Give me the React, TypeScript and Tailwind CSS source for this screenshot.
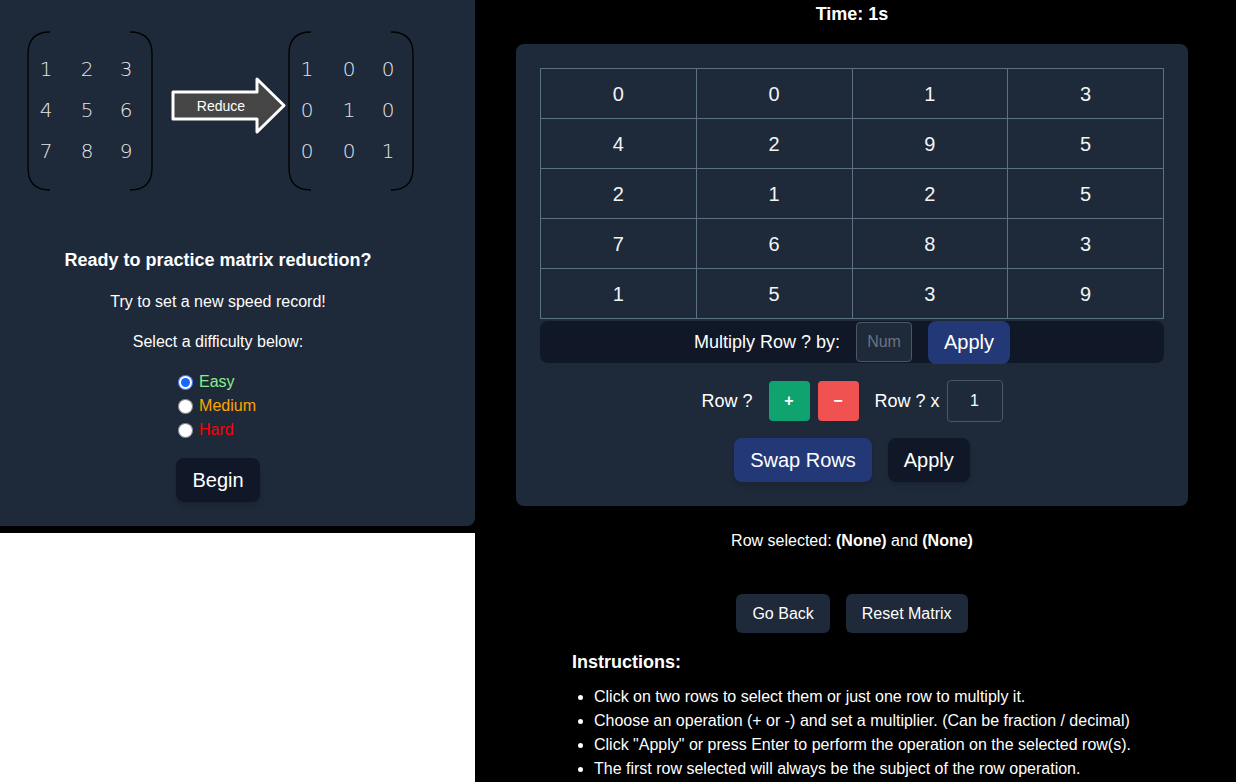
import React, { useState } from 'react';

const matrix = [
  [0, 0, 1, 3],
  [4, 2, 9, 5],
  [2, 1, 2, 5],
  [7, 6, 8, 3],
  [1, 5, 3, 9],
];

const instructions = [
  'Click on two rows to select them or just one row to multiply it.',
  'Choose an operation (+ or -) and set a multiplier. (Can be fraction / decimal)',
  'Click "Apply" or press Enter to perform the operation on the selected row(s).',
  'The first row selected will always be the subject of the row operation.',
];

const ReduceGraphic: React.FC = () => {
  const cols1 = [46, 87, 126];
  const cols2 = [307, 349, 388];
  const rows = [76, 117, 158];
  const left = [
    [1, 2, 3],
    [4, 5, 6],
    [7, 8, 9],
  ];
  const right = [
    [1, 0, 0],
    [0, 1, 0],
    [0, 0, 1],
  ];
  const numFont = { fontFamily: '"DejaVu Sans", sans-serif', fontWeight: 200 };
  return (
    <svg width="430" height="210" viewBox="0 0 430 210" className="block">
      <g fill="none" stroke="#000" strokeWidth="1.3">
        <path d="M50 32 Q28 32 28 54 V168 Q28 190 50 190" />
        <path d="M130 32 Q152 32 152 54 V168 Q152 190 130 190" />
        <path d="M311 32 Q289 32 289 54 V168 Q289 190 311 190" />
        <path d="M391 32 Q413 32 413 54 V168 Q413 190 391 190" />
      </g>
      <g fill="#e5e7eb" fontSize="20" textAnchor="middle" style={numFont}>
        {left.map((r, i) =>
          r.map((v, j) => (
            <text key={`l${i}${j}`} x={cols1[j]} y={rows[i]}>
              {v}
            </text>
          ))
        )}
        {right.map((r, i) =>
          r.map((v, j) => (
            <text key={`r${i}${j}`} x={cols2[j]} y={rows[i]}>
              {v}
            </text>
          ))
        )}
      </g>
      <polygon
        points="173,92 257,92 257,79 284,105.5 257,132 257,119 173,119"
        fill="#454545"
        stroke="#fff"
        strokeWidth="3"
        strokeLinejoin="round"
      />
      <text
        x="221"
        y="111"
        fill="#fff"
        fontSize="14"
        textAnchor="middle"
        style={{ fontFamily: '"Liberation Sans", Arial, sans-serif' }}
      >
        Reduce
      </text>
    </svg>
  );
};

const StartPanel: React.FC = () => {
  const [level, setLevel] = useState('easy');
  const options = [
    { id: 'easy', label: 'Easy', color: 'text-[#86ef8c]' },
    { id: 'medium', label: 'Medium', color: 'text-[#ffa500]' },
    { id: 'hard', label: 'Hard', color: 'text-[#ff0000]' },
  ];
  return (
    <div className="bg-black h-[533px] w-[475px] shrink-0">
      <div className="bg-gray-800 h-[526px] rounded-br-lg">
        <ReduceGraphic />
        <div className="w-[436px] flex flex-col items-center text-white">
          <h2 className="mt-[37px] text-lg font-bold leading-[27px]">Ready to practice matrix reduction?</h2>
          <p className="mt-[16px] leading-6">Try to set a new speed record!</p>
          <p className="mt-4 leading-6">Select a difficulty below:</p>
          <div className="mt-[16px] flex flex-col ml-[-2px]">
            {options.map(o => (
              <label key={o.id} className="flex items-center h-6 gap-[6px]">
                <input
                  type="radio"
                  name="level"
                  checked={level === o.id}
                  onChange={() => setLevel(o.id)}
                  className="w-[15px] h-[15px] m-0 accent-[#1a66ff]"
                />
                <span className={o.color}>{o.label}</span>
              </label>
            ))}
          </div>
          <button className="mt-[16px] h-[44px] px-[16px] rounded-lg bg-gray-900 text-xl shadow-md">Begin</button>
        </div>
      </div>
    </div>
  );
};

const MatrixPanel: React.FC = () => (
  <div className="w-[672px] bg-gray-800 rounded-lg p-6 mt-4">
    <table className="w-full border-collapse table-fixed">
      <tbody>
        {matrix.map((row, i) => (
          <tr key={i} className="h-[50px]">
            {row.map((v, j) => (
              <td key={j} className="border border-[#5d7185] text-center text-xl text-gray-100">
                {v}
              </td>
            ))}
          </tr>
        ))}
      </tbody>
    </table>
    <div className="mt-[2px] h-[42px] bg-gray-900 rounded-lg flex items-center justify-center gap-4">
      <span className="text-lg">Multiply Row ? by:</span>
      <input
        placeholder="Num"
        className="w-[56px] h-[40px] bg-gray-800 border border-gray-600 rounded text-center text-base placeholder:text-gray-500"
      />
      <button className="h-[43px] px-[16px] rounded-lg bg-[#233876] text-xl">Apply</button>
    </div>
    <div className="mt-[17px] flex items-center justify-center">
      <span className="text-lg mr-4">Row ?</span>
      <button className="w-[41px] h-[40px] rounded bg-[#0fa36f] font-bold">+</button>
      <button className="w-[41px] h-[40px] rounded bg-[#f05252] font-bold ml-2">−</button>
      <span className="text-lg ml-4 mr-[7px]">Row ? x</span>
      <input
        defaultValue="1"
        className="w-[56px] h-[42px] bg-gray-800 border border-gray-600 rounded text-center text-base"
      />
    </div>
    <div className="mt-4 flex items-center justify-center gap-4">
      <button className="h-[44px] px-4 rounded-lg bg-[#233876] text-xl shadow-md">Swap Rows</button>
      <button className="h-[44px] px-4 rounded-lg bg-gray-900 text-xl shadow-md">Apply</button>
    </div>
  </div>
);

const App: React.FC = () => {
  return (
    <div
      className="flex min-h-[782px] bg-white text-white"
      style={{ fontFamily: '"Liberation Sans", Arial, sans-serif' }}
    >
      <StartPanel />
      <div className="flex-1 bg-black pr-[7px] flex flex-col items-center">
        <div className="text-lg font-bold leading-[28px]">Time: 1s</div>
        <MatrixPanel />
        <p className="mt-[23px] leading-6">
          Row selected: <b>(None)</b> and <b>(None)</b>
        </p>
        <div className="mt-[41px] flex gap-4">
          <button className="h-[39px] px-4 rounded-md bg-gray-800">Go Back</button>
          <button className="h-[39px] px-4 rounded-md bg-gray-800">Reset Matrix</button>
        </div>
        <div className="self-start ml-[97px] mt-[16px]">
          <h3 className="text-lg font-bold leading-[27px]">Instructions:</h3>
          <ul className="list-disc pl-[22px] mt-[9px]">
            {instructions.map(t => (
              <li key={t} className="leading-6">
                {t}
              </li>
            ))}
          </ul>
        </div>
      </div>
    </div>
  );
};

export default App;
